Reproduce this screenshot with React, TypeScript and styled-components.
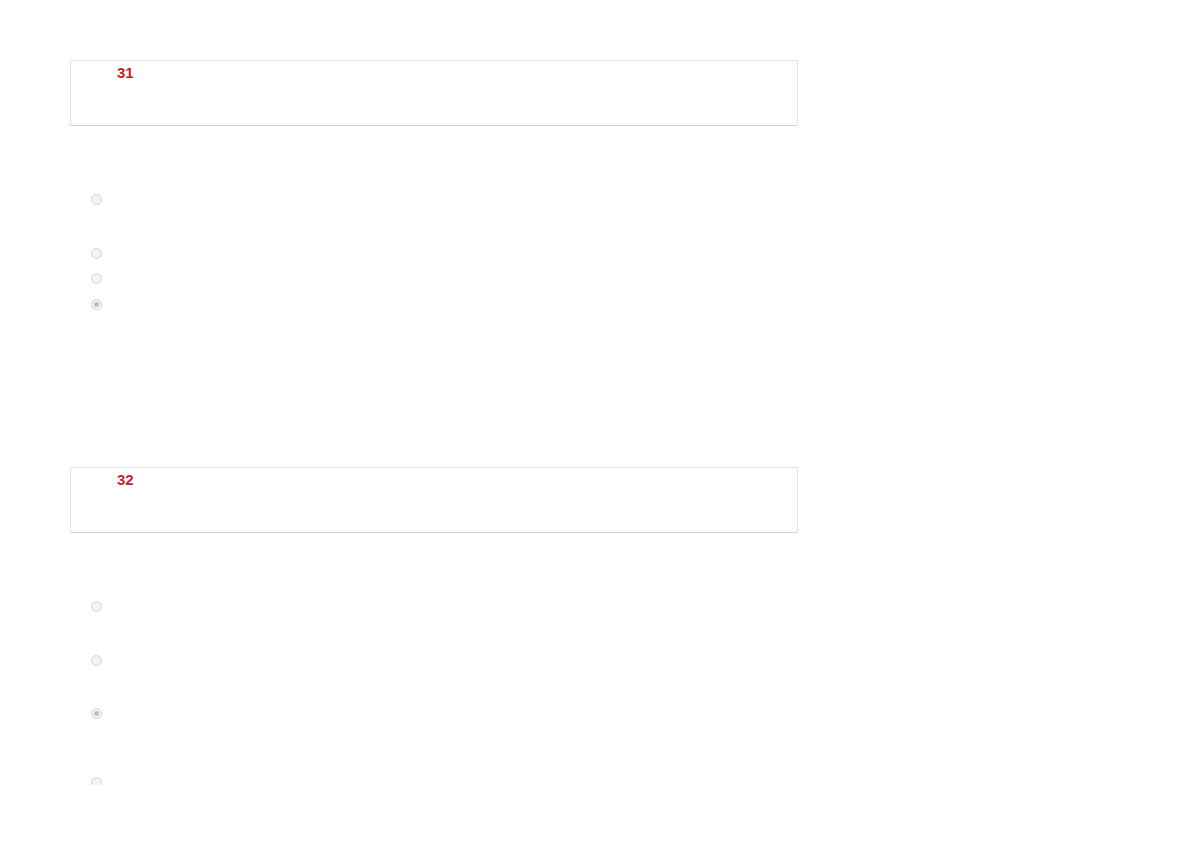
import React from "react";
import styled, { createGlobalStyle } from "styled-components";

const Global = createGlobalStyle`
  html, body { margin: 0; padding: 0; background: #ffffff; }
  body { font-family: "Liberation Sans", Arial, sans-serif; }
`;

const Page = styled.div`
  height: 785px;
  overflow: hidden;
  padding: 60px 0 0 70px;
  box-sizing: border-box;
  display: flex;
  flex-direction: column;
  gap: 142px;
`;

const Question = styled.section`
  display: flex;
  flex-direction: column;
  gap: 68px;
`;

const StemBox = styled.div`
  width: 728px;
  height: 66px;
  box-sizing: border-box;
  border: 1px solid #e3e3e3;
  border-bottom-color: #cfd2d8;
  padding: 3px 0 0 46px;
`;

const Num = styled.span`
  font-family: "Liberation Sans", Arial, sans-serif;
  font-weight: 700;
  font-size: 15px;
  line-height: 17px;
  color: #c1252b;
`;

const Options = styled.ul`
  list-style: none;
  margin: 0;
  padding: 0 0 0 21px;
  display: flex;
  flex-direction: column;
`;

const Option = styled.li<{ $h: number }>`
  height: ${(p) => p.$h}px;
  display: flex;
  align-items: flex-start;
`;

const Radio = styled.span<{ $checked?: boolean }>`
  width: 11px;
  height: 11px;
  box-sizing: border-box;
  border-radius: 50%;
  border: 1px solid #d4d4d4;
  background: #f3f3f3;
  display: flex;
  align-items: center;
  justify-content: center;
  &::after {
    content: "";
    width: 5px;
    height: 5px;
    border-radius: 50%;
    background: ${(p) => (p.$checked ? "#bfbfbf" : "transparent")};
  }
`;

type Q = { num: number; rows: { h: number; checked?: boolean }[] };

const questions: Q[] = [
  { num: 31, rows: [{ h: 54 }, { h: 25 }, { h: 26 }, { h: 26, checked: true }] },
  { num: 32, rows: [{ h: 54 }, { h: 53 }, { h: 69, checked: true }, { h: 26 }] },
];

export default function App() {
  return (
    <>
      <Global />
      <Page>
        {questions.map((q) => (
          <Question key={q.num}>
            <StemBox>
              <Num>{q.num}</Num>
            </StemBox>
            <Options>
              {q.rows.map((r, i) => (
                <Option key={i} $h={r.h}>
                  <Radio $checked={r.checked} />
                </Option>
              ))}
            </Options>
          </Question>
        ))}
      </Page>
    </>
  );
}
